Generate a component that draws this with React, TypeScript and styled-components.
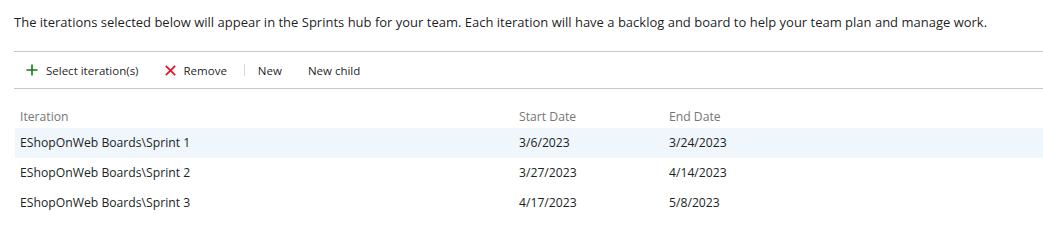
import React from "react";
import styled, { createGlobalStyle } from "styled-components";

const GlobalStyle = createGlobalStyle`
  body {
    margin: 0;
    background: #ffffff;
    font-family: "Open Sans", "Noto Sans", sans-serif;
    color: rgba(0, 0, 0, 0.9);
  }
`;

type Iteration = { path: string; start: string; end: string };

const iterations: Iteration[] = [
  { path: "EShopOnWeb Boards\\Sprint 1", start: "3/6/2023", end: "3/24/2023" },
  { path: "EShopOnWeb Boards\\Sprint 2", start: "3/27/2023", end: "4/14/2023" },
  { path: "EShopOnWeb Boards\\Sprint 3", start: "4/17/2023", end: "5/8/2023" },
];

const PlusIcon = () => (
  <svg width="12" height="12" viewBox="0 0 12 12">
    <path d="M6 0.5V11.5M0.5 6H11.5" stroke="#107c10" strokeWidth="1.6" fill="none" />
  </svg>
);

const CrossIcon = () => (
  <svg width="11" height="11" viewBox="0 0 11 11">
    <path d="M0.8 0.8L10.2 10.2M10.2 0.8L0.8 10.2" stroke="#e81123" strokeWidth="1.7" fill="none" />
  </svg>
);

export default function App() {
  return (
    <>
      <GlobalStyle />
      <Page>
        <Intro>
          The iterations selected below will appear in the Sprints hub for your team. Each iteration will have a
          backlog and board to help your team plan and manage work.
        </Intro>
        <Toolbar>
          <ToolButton>
            <PlusIcon />
            Select iteration(s)
          </ToolButton>
          <ToolButton>
            <CrossIcon />
            Remove
          </ToolButton>
          <Separator />
          <ToolButton>New</ToolButton>
          <ToolButton>New child</ToolButton>
        </Toolbar>
        <Table>
          <HeaderRow>
            <HeaderCell>Iteration</HeaderCell>
            <HeaderCell>Start Date</HeaderCell>
            <HeaderCell>End Date</HeaderCell>
          </HeaderRow>
          {iterations.map((it, i) => (
            <Row key={it.path} selected={i === 0}>
              <Cell>{it.path}</Cell>
              <Cell>{it.start}</Cell>
              <Cell>{it.end}</Cell>
            </Row>
          ))}
        </Table>
      </Page>
    </>
  );
}

const Page = styled.div`
  padding: 12px 0 0 14px;
`;

const Intro = styled.p`
  margin: 0 0 19px;
  font-size: 13px;
  line-height: 20px;
  white-space: nowrap;
`;

const Toolbar = styled.div`
  display: flex;
  align-items: center;
  height: 36px;
  border-top: 1px solid #c8c8c8;
  border-bottom: 1px solid #c8c8c8;
`;

const ToolButton = styled.button`
  display: flex;
  align-items: center;
  gap: 8px;
  height: 32px;
  padding: 0 12px;
  margin-right: 2px;
  border: none;
  background: transparent;
  font-family: "Open Sans", "Noto Sans", sans-serif;
  font-size: 11.5px;
  color: rgba(0, 0, 0, 0.9);
  cursor: pointer;
`;

const Separator = styled.div`
  width: 1px;
  height: 12px;
  background: #d6d6d6;
  margin: 0 1px 0 3px;
`;

const Table = styled.div`
  margin-left: 1px;
  font-size: 12.2px;
`;

const Grid = styled.div`
  display: grid;
  grid-template-columns: 499px 150px 1fr;
`;

const HeaderRow = styled(Grid)`
  height: 39px;
  align-items: end;
  padding-bottom: 1px;
  box-sizing: border-box;
`;

const HeaderCell = styled.div`
  padding: 0 5px;
  line-height: 20px;
  color: #767676;
`;

const Row = styled(Grid)<{ selected?: boolean }>`
  height: 30px;
  align-items: center;
  background: ${(p) => (p.selected ? "#eff6fc" : "transparent")};
`;

const Cell = styled.div`
  padding: 0 5px;
  line-height: 20px;
  color: #201f1e;
`;
